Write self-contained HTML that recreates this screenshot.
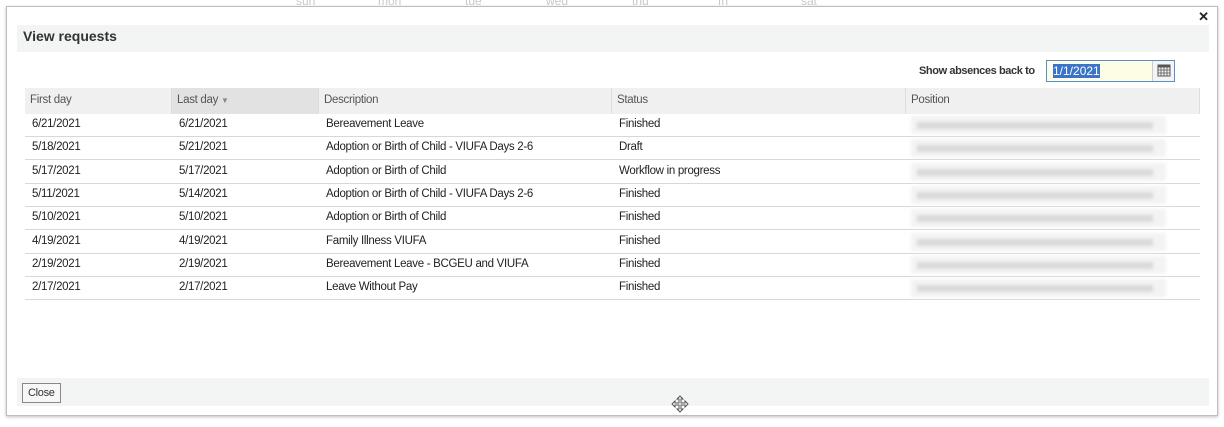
<!DOCTYPE html>
<html><head><meta charset="utf-8"><style>
*{margin:0;padding:0;box-sizing:border-box}
body{width:1224px;height:427px;background:#fff;position:relative;overflow:hidden;font-family:"Liberation Sans",sans-serif;font-size:12px;color:#222}
.bgt{position:absolute;top:-6px;font-size:12px;color:#c8c8c8}
.dlg{position:absolute;left:6px;top:6px;width:1212px;height:410px;background:#fff;border:1px solid #bdbdbd;box-shadow:0 1px 3px rgba(0,0,0,.25)}
.a{position:absolute}
.title{left:10px;top:18px;width:1192px;height:27px;background:#f3f4f4;font-weight:bold;font-size:14px;color:#333;padding:3px 0 0 6px}
.hdr{left:18px;top:81px;width:1175px;height:26px;background:#f0f0f0;border-right:1px solid #ddd}
.hc{position:absolute;top:0;height:26px;padding:6px 0 0 5px;color:#555;font-size:11.5px;letter-spacing:-0.3px;border-left:1px solid #ddd}
.row{position:absolute;left:18px;width:1175px;height:23px;border-bottom:1px solid #d8d8d8}
.c{position:absolute;top:4px;font-size:11.5px;letter-spacing:-0.3px}
.blur{position:absolute;left:886px;top:2px;width:255px;height:18px;background:#f3f3f3;filter:blur(1.5px)}
.blur:after{content:"";position:absolute;left:6px;top:6px;width:236px;height:7px;background:#dadada}
.foot{left:10px;top:371px;width:1192px;height:28px;background:#f3f4f4}
</style></head><body>
<div class="bgt" style="left:296px">sun</div><div class="bgt" style="left:378px">mon</div><div class="bgt" style="left:465px">tue</div><div class="bgt" style="left:546px">wed</div><div class="bgt" style="left:632px">thu</div><div class="bgt" style="left:718px">fri</div><div class="bgt" style="left:801px">sat</div>
<div class="dlg">
<div class="a" style="right:8px;top:2px;font-weight:bold;font-size:13px">✕</div>
<div class="a title">View requests</div>
<div class="a" style="left:912px;top:58px;font-weight:bold;font-size:11px;letter-spacing:-0.4px;color:#333">Show absences back to</div>
<div class="a" style="left:1039px;top:53px;width:129px;height:22px;border:1px solid #5b8fc4;background:#fdfde6">
<span style="position:absolute;left:6px;top:3px;background:#3b73c8;color:#fff;font-size:12px;line-height:14px">1/1/2021</span>
<div style="position:absolute;right:0;top:0;width:22px;height:20px;border-left:1px solid #ccc;background:#f4f4f4">
<svg width="14" height="13" style="position:absolute;left:4px;top:3px" viewBox="0 0 14 13"><rect x="1" y="1" width="12" height="11" fill="none" stroke="#555"/><rect x="1" y="1" width="12" height="2.5" fill="#555"/><path d="M1 6h12M1 9h12M4 3v9M7 3v9M10 3v9" stroke="#555" stroke-width=".8"/></svg></div></div>
<div class="a hdr">
<div class="hc" style="left:0;border-left:none">First day</div>
<div class="hc" style="left:146px;width:147px;background:#e2e2e2">Last day <span style="font-size:8px;color:#888">▼</span></div>
<div class="hc" style="left:293px">Description</div>
<div class="hc" style="left:586px">Status</div>
<div class="hc" style="left:880px">Position</div>
</div>
<div class="row" style="top:107px"><span class="c" style="left:7px">6/21/2021</span><span class="c" style="left:154px">6/21/2021</span><span class="c" style="left:301px">Bereavement Leave</span><span class="c" style="left:594px">Finished</span><div class="blur"></div></div>
<div class="row" style="top:130px"><span class="c" style="left:7px">5/18/2021</span><span class="c" style="left:154px">5/21/2021</span><span class="c" style="left:301px">Adoption or Birth of Child - VIUFA Days 2-6</span><span class="c" style="left:594px">Draft</span><div class="blur"></div></div>
<div class="row" style="top:154px"><span class="c" style="left:7px">5/17/2021</span><span class="c" style="left:154px">5/17/2021</span><span class="c" style="left:301px">Adoption or Birth of Child</span><span class="c" style="left:594px">Workflow in progress</span><div class="blur"></div></div>
<div class="row" style="top:177px"><span class="c" style="left:7px">5/11/2021</span><span class="c" style="left:154px">5/14/2021</span><span class="c" style="left:301px">Adoption or Birth of Child - VIUFA Days 2-6</span><span class="c" style="left:594px">Finished</span><div class="blur"></div></div>
<div class="row" style="top:200px"><span class="c" style="left:7px">5/10/2021</span><span class="c" style="left:154px">5/10/2021</span><span class="c" style="left:301px">Adoption or Birth of Child</span><span class="c" style="left:594px">Finished</span><div class="blur"></div></div>
<div class="row" style="top:224px"><span class="c" style="left:7px">4/19/2021</span><span class="c" style="left:154px">4/19/2021</span><span class="c" style="left:301px">Family Illness VIUFA</span><span class="c" style="left:594px">Finished</span><div class="blur"></div></div>
<div class="row" style="top:247px"><span class="c" style="left:7px">2/19/2021</span><span class="c" style="left:154px">2/19/2021</span><span class="c" style="left:301px">Bereavement Leave - BCGEU and VIUFA</span><span class="c" style="left:594px">Finished</span><div class="blur"></div></div>
<div class="row" style="top:270px"><span class="c" style="left:7px">2/17/2021</span><span class="c" style="left:154px">2/17/2021</span><span class="c" style="left:301px">Leave Without Pay</span><span class="c" style="left:594px">Finished</span><div class="blur"></div></div>
<div class="a foot"></div>
<div class="a" style="left:15px;top:376px;width:39px;height:20px;border:1px solid #888;background:#f7f7f7;font-size:11px;letter-spacing:-0.3px;padding:3px 0 0 5px;color:#333">Close</div>
<svg class="a" style="left:663px;top:388px" width="20" height="20" viewBox="0 0 20 20"><path d="M10 1l3 3h-2v4h4V6l3 3-3 3v-2h-4v4h2l-3 3-3-3h2v-4H5v2L2 9l3-3v2h4V4H7z" fill="#fff" stroke="#555" stroke-width="1"/></svg>
</div>
</body></html>
